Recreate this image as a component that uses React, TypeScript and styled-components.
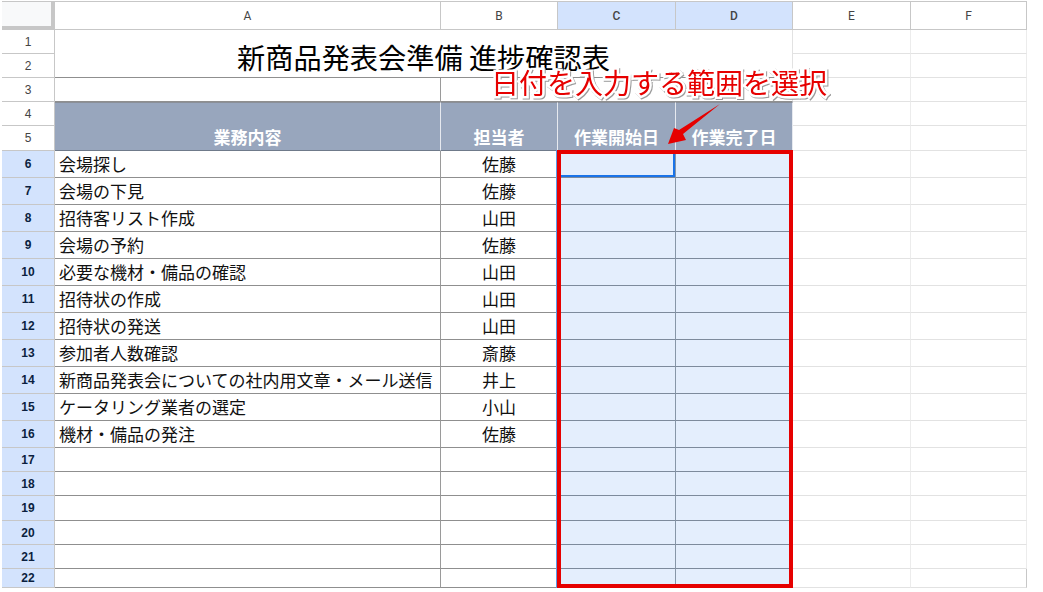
import { createGlobalStyle, styled } from "styled-components";

const GlobalStyle = createGlobalStyle`
  html, body {
    margin: 0;
    background: #fff;
  }
  body {
    font-family: "Noto Sans CJK JP", "Liberation Sans", sans-serif;
  }
`;

const tasks = [
  ["会場探し", "佐藤"],
  ["会場の下見", "佐藤"],
  ["招待客リスト作成", "山田"],
  ["会場の予約", "佐藤"],
  ["必要な機材・備品の確認", "山田"],
  ["招待状の作成", "山田"],
  ["招待状の発送", "山田"],
  ["参加者人数確認", "斎藤"],
  ["新商品発表会についての社内用文章・メール送信", "井上"],
  ["ケータリング業者の選定", "小山"],
  ["機材・備品の発注", "佐藤"],
  ["", ""],
  ["", ""],
  ["", ""],
  ["", ""],
  ["", ""],
  ["", ""],
];

const columns = ["A", "B", "C", "D", "E", "F"];
const headers = ["業務内容", "担当者", "作業開始日", "作業完了日"];

function App() {
  return (
    <>
      <GlobalStyle />
      <Sheet>
        <Grid>
          <Corner />
          {columns.map((name) => (
            <ColumnHead key={name} $selected={name === "C" || name === "D"}>
              {name}
            </ColumnHead>
          ))}

          <RowHead>1</RowHead>
          <Title>新商品発表会準備 進捗確認表</Title>
          <Blank />
          <Blank />
          <RowHead>2</RowHead>
          <Blank />
          <Blank />

          <RowHead>3</RowHead>
          <Cell />
          <Cell $span={3} />
          <Blank />
          <Blank />

          <RowHead>4</RowHead>
          {headers.map((label, i) => (
            <HeaderCell key={label} $col={i + 2}>
              {label}
            </HeaderCell>
          ))}
          <Blank />
          <Blank />
          <RowHead>5</RowHead>
          <Blank />
          <Blank />

          {tasks.map(([task, owner], i) => (
            <Row key={i} number={i + 6} task={task} owner={owner} />
          ))}
        </Grid>

        <SelectionBox />
        <Callout>日付を入力する範囲を選択</Callout>
        <Arrow viewBox="0 0 56 44" aria-hidden="true">
          <polygon points="54,1 13,27 8,25 2,41 20,37 17,31" fill="#e60000" />
        </Arrow>
      </Sheet>
    </>
  );
}

function Row({ number, task, owner }: { number: number; task: string; owner: string }) {
  return (
    <>
      <RowHead $selected>{number}</RowHead>
      <Cell>{task}</Cell>
      <Cell $center>{owner}</Cell>
      <Cell $picked $active={number === 6} />
      <Cell $picked />
      <Blank />
      <Blank $edge={number === 22} />
    </>
  );
}

export default App;

const Sheet = styled.div`
  position: relative;
  width: 1025px;
  height: 586px;
  overflow: hidden;
  margin: 1px 0 0 2px;
  border-top: 1px solid #c7c7c7;
`;

const Grid = styled.div`
  display: grid;
  grid-template-columns: 53px 386px 117px 118px 117px 118px 116px;
  grid-template-rows:
    28px 24px 24px 24px 24px 25px
    repeat(11, 27px)
    24px 24px 25px 24px 24px 19px;
`;

const Corner = styled.div`
  box-sizing: border-box;
  background: #f8f9fa;
  border-right: 4px solid #c7c7c7;
  border-bottom: 4px solid #c7c7c7;
`;

const ColumnHead = styled.div<{ $selected?: boolean }>`
  box-sizing: border-box;
  display: flex;
  align-items: center;
  justify-content: center;
  background: ${(p) => (p.$selected ? "#d3e3fd" : "#fff")};
  border-right: 1px solid #c7c7c7;
  border-bottom: 1px solid #c7c7c7;
  color: #444;
  font: ${(p) => (p.$selected ? "500" : "400")} 12px Roboto, "Liberation Sans", sans-serif;
`;

const RowHead = styled.div<{ $selected?: boolean }>`
  box-sizing: border-box;
  display: flex;
  align-items: center;
  justify-content: center;
  grid-column: 1;
  background: ${(p) => (p.$selected ? "#d3e3fd" : "#fff")};
  border-right: 1px solid #c7c7c7;
  border-bottom: 1px solid #c7c7c7;
  color: ${(p) => (p.$selected ? "#0b1f3f" : "#444")};
  font: ${(p) => (p.$selected ? "700" : "400")} 12px "Liberation Sans", Arial, sans-serif;
`;

const Cell = styled.div<{ $center?: boolean; $picked?: boolean; $active?: boolean; $span?: number }>`
  box-sizing: border-box;
  grid-column: span ${(p) => p.$span ?? 1};
  padding: 0 4px;
  overflow: hidden;
  white-space: nowrap;
  text-align: ${(p) => (p.$center ? "center" : "left")};
  background: ${(p) => (p.$picked ? "#e4eefd" : "#fff")};
  border-right: 1px solid ${(p) => (p.$picked ? "#8796a8" : p.$span ? "#e2e2e2" : "#9a9a9a")};
  border-bottom: 1px solid ${(p) => (p.$picked ? "#7d8a9c" : "#8f8f8f")};
  box-shadow: ${(p) => (p.$active ? "inset 0 0 0 2px #1a73e8" : "none")};
  color: #111;
  font-size: 17px;
  line-height: 26px;
`;

const Blank = styled.div<{ $edge?: boolean }>`
  box-sizing: border-box;
  border-right: 1px solid ${(p) => (p.$edge ? "#c7c7c7" : "#ececec")};
  border-bottom: 1px solid #e2e2e2;
`;

const Title = styled.div`
  box-sizing: border-box;
  grid-column: 2 / span 4;
  grid-row: 2 / span 2;
  display: flex;
  align-items: center;
  justify-content: center;
  border-right: 1px solid #e2e2e2;
  border-bottom: 1px solid #8f8f8f;
  color: #000;
  font-size: 28.2px;
  line-height: 1;
  padding-top: 8px;
`;

const HeaderCell = styled.div<{ $col: number }>`
  box-sizing: border-box;
  grid-column: ${(p) => p.$col};
  grid-row: 5 / span 2;
  display: flex;
  align-items: flex-end;
  justify-content: center;
  background: #98a6bd;
  border-top: 1px solid #8a8f98;
  border-right: 1px solid #e6e9ef;
  border-bottom: 1px solid #6f7a8a;
  color: #fff;
  font-size: 17px;
  font-weight: 700;
  line-height: 26px;
`;

const SelectionBox = styled.div`
  position: absolute;
  left: 555px;
  top: 148px;
  width: 236px;
  height: 438px;
  box-sizing: border-box;
  border: 4px solid #e60000;
  box-shadow: -1px 0 0 #5b9be8;
  pointer-events: none;
`;

const Callout = styled.div`
  position: absolute;
  left: 489px;
  top: 62px;
  color: #e60000;
  font-size: 28px;
  line-height: 36px;
  white-space: nowrap;
  -webkit-text-stroke: 5px #fff;
  paint-order: stroke fill;
  filter: drop-shadow(1px 1px 0.5px #9a9a9a);
`;

const Arrow = styled.svg`
  position: absolute;
  left: 664px;
  top: 101px;
  width: 56px;
  height: 44px;
`;
